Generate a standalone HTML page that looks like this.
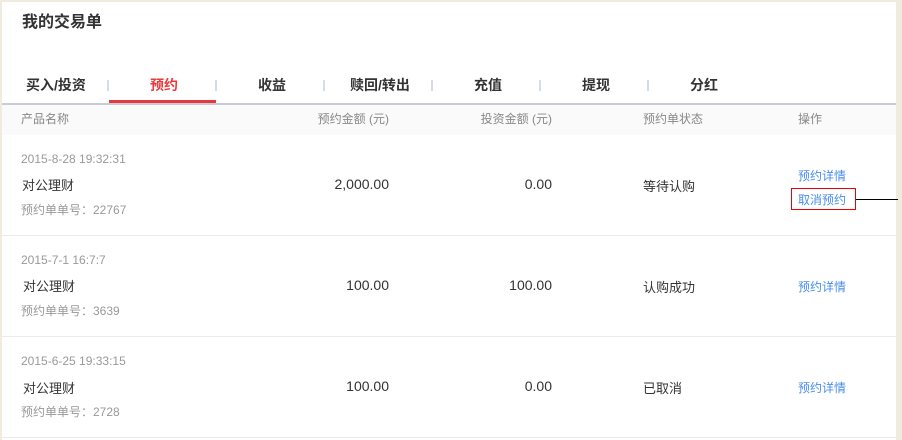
<!DOCTYPE html>
<html><head><meta charset="utf-8"><style>
*{margin:0;padding:0;box-sizing:border-box}
body{width:902px;height:440px;background:#efebdf;font-family:"Liberation Sans","Noto Sans CJK SC",sans-serif;position:relative;overflow:hidden}
.panel{position:absolute;left:2px;top:2px;width:894px;height:438px;background:#fff}
.a{position:absolute;white-space:nowrap}
.title{left:20px;top:6px;font-size:16px;font-weight:bold;color:#333}
.tab{position:absolute;top:73px;width:108px;text-align:center;font-size:14px;font-weight:bold;color:#333}
.sep{position:absolute;top:78px;width:2px;height:11px;background:#d4dcea}
.hdr{position:absolute;left:0;top:101px;width:894px;height:32px;background:#fafafa;border-top:2px solid #cacbd9}
.h{font-size:12px;color:#888;top:108px}
.row{position:absolute;left:0;width:894px;height:101px;border-bottom:1px solid #ebebeb}
.t{font-size:12px;color:#999}
.n{font-size:13px;color:#333}
.m{font-size:14px;color:#333}
.l{font-size:12px;color:#4a8ee6}
</style></head><body>
<div class="panel">
<div class="a title">我的交易单</div>
<div class="tab" style="left:0">买入/投资</div>
<div class="tab" style="left:108px;color:#e83a3a">预约</div>
<div class="tab" style="left:216px">收益</div>
<div class="tab" style="left:324px">赎回/转出</div>
<div class="tab" style="left:432px">充值</div>
<div class="tab" style="left:540px">提现</div>
<div class="tab" style="left:648px">分红</div>
<div class="sep" style="left:105px"></div><div class="sep" style="left:213px"></div><div class="sep" style="left:321px"></div><div class="sep" style="left:429px"></div><div class="sep" style="left:537px"></div><div class="sep" style="left:645px"></div>
<div class="hdr"></div>
<div class="a" style="left:107px;top:98px;width:107px;height:3px;background:#e83a3a"></div>
<div class="a h" style="left:19px">产品名称</div>
<div class="a h" style="right:507px">预约金额 (元)</div>
<div class="a h" style="right:344px">投资金额 (元)</div>
<div class="a h" style="left:641px">预约单状态</div>
<div class="a h" style="left:796px">操作</div>

<div class="row" style="top:133px"></div>
<div class="a t" style="left:19px;top:150px">2015-8-28 19:32:31</div>
<div class="a n" style="left:20px;top:173px">对公理财</div>
<div class="a t" style="left:19px;top:199px">预约单单号：22767</div>
<div class="a m" style="right:507px;top:174px">2,000.00</div>
<div class="a m" style="right:344px;top:174px">0.00</div>
<div class="a n" style="left:641px;top:174px">等待认购</div>
<div class="a l" style="left:796px;top:165px">预约详情</div>
<div class="a l" style="left:789px;top:186px;width:65px;height:22px;border:1px solid #e00;padding:2px 0 0 6px">取消预约</div>
<div class="a" style="left:854px;top:197px;width:42px;height:1px;background:#000"></div>

<div class="row" style="top:234px"></div>
<div class="a t" style="left:19px;top:251px">2015-7-1 16:7:7</div>
<div class="a n" style="left:21px;top:274px">对公理财</div>
<div class="a t" style="left:19px;top:300px">预约单单号：3639</div>
<div class="a m" style="right:507px;top:275px">100.00</div>
<div class="a m" style="right:344px;top:275px">100.00</div>
<div class="a n" style="left:641px;top:275px">认购成功</div>
<div class="a l" style="left:796px;top:276px">预约详情</div>

<div class="row" style="top:335px"></div>
<div class="a t" style="left:19px;top:352px">2015-6-25 19:33:15</div>
<div class="a n" style="left:21px;top:376px">对公理财</div>
<div class="a t" style="left:19px;top:401px">预约单单号：2728</div>
<div class="a m" style="right:507px;top:376px">100.00</div>
<div class="a m" style="right:344px;top:376px">0.00</div>
<div class="a n" style="left:641px;top:376px">已取消</div>
<div class="a l" style="left:796px;top:377px">预约详情</div>
</div>
</body></html>
